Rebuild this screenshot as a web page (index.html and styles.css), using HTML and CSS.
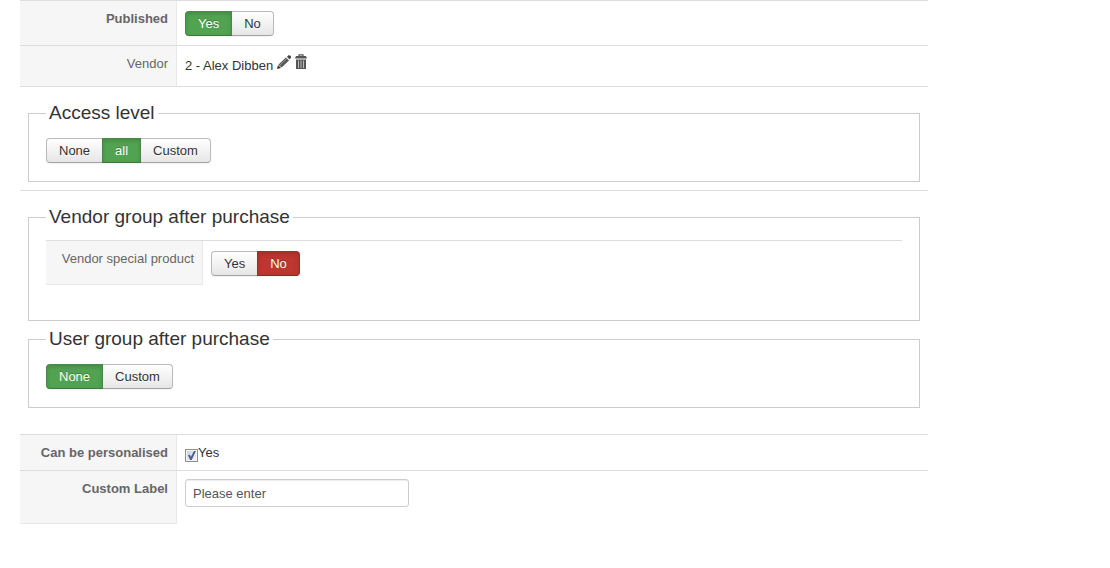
FILE: index.html
```html
<!DOCTYPE html>
<html lang="en">
<head>
    <meta charset="utf-8">
    <title>Product</title>
    <link rel="stylesheet" href="styles.css">
</head>
<body>
    <form class="product-form">
        <div class="row">
            <div class="key"><strong id="publishedKey">Published</strong></div>
            <div class="value">
                <div class="btn-group" role="radiogroup" aria-labelledby="publishedKey">
                    <input type="radio" name="published" id="publishedYes" checked>
                    <label class="btn" for="publishedYes">Yes</label>
                    <input type="radio" name="published" id="publishedNo" class="negative">
                    <label class="btn" for="publishedNo">No</label>
                </div>
            </div>
        </div>

        <div class="row vendor">
            <div class="key">Vendor</div>
            <div class="value">
                <span class="vendor-name">2 - Alex Dibben</span>
                <a class="icon" href="#" aria-label="Edit vendor">
                    <svg width="14" height="16" viewBox="0 0 14 16">
                        <path d="M0 15l1-4 3 3z" fill="#333"/>
                        <path d="M1.500 10.500L9 3.500l3 3-7.500 7z" fill="#555"/>
                        <path d="M2.500 11.500L10 4.500" stroke="#999" stroke-width="1"/>
                        <path d="M10 2.700L11.500 1.300Q12.500 .8 13.500 1.800T13.800 3.800L12.600 5.500z" fill="#444"/>
                    </svg>
                </a>
                <a class="icon" href="#" aria-label="Remove vendor">
                    <svg width="12" height="16" viewBox="0 0 12 16">
                        <path d="M4 2.500V.8h4v1.700" fill="none" stroke="#555" stroke-width="1.200"/>
                        <path d="M1 2h10l1 2.500H0z" fill="#555"/>
                        <path d="M1 5.500h10V15H1z" fill="#555"/>
                        <path d="M3.500 6.500V14M6 6.500V14M8.500 6.500V14" stroke="#bbb" stroke-width="1"/>
                    </svg>
                </a>
            </div>
        </div>

        <div class="section">
            <fieldset>
                <legend>Access level</legend>
                <div class="btn-group">
                    <input type="radio" name="access" id="accessNone">
                    <label class="btn" for="accessNone">None</label>
                    <input type="radio" name="access" id="accessAll" checked>
                    <label class="btn" for="accessAll">all</label>
                    <input type="radio" name="access" id="accessCustom">
                    <label class="btn" for="accessCustom">Custom</label>
                </div>
            </fieldset>
        </div>

        <div class="section last">
            <fieldset>
                <legend>Vendor group after purchase</legend>
                <div class="row block-end">
                    <div class="key" id="specialKey">Vendor special product</div>
                    <div class="value">
                        <div class="btn-group" role="radiogroup" aria-labelledby="specialKey">
                            <input type="radio" name="special" id="specialYes">
                            <label class="btn" for="specialYes">Yes</label>
                            <input type="radio" name="special" id="specialNo" class="negative" checked>
                            <label class="btn" for="specialNo">No</label>
                        </div>
                    </div>
                </div>
            </fieldset>
            <fieldset>
                <legend>User group after purchase</legend>
                <div class="btn-group">
                    <input type="radio" name="usergroup" id="usergroupNone" checked>
                    <label class="btn" for="usergroupNone">None</label>
                    <input type="radio" name="usergroup" id="usergroupCustom">
                    <label class="btn" for="usergroupCustom">Custom</label>
                </div>
            </fieldset>
        </div>

        <div class="row">
            <div class="key"><strong>Can be personalised</strong></div>
            <div class="value check">
                <input type="checkbox" id="personalised" checked>
                <label for="personalised">Yes</label>
            </div>
        </div>

        <div class="row">
            <div class="key"><label for="customLabel"><strong>Custom Label</strong></label></div>
            <div class="value">
                <input type="text" id="customLabel" value="Please enter">
            </div>
        </div>
    </form>
</body>
</html>
```
FILE: styles.css
```css
* {
    box-sizing: border-box;
}
body {
    margin: 0;
    padding: 0 20px;
    background-color: #fff;
    color: #333;
    font-family: "Liberation Sans", Arial, sans-serif;
    font-size: 13px;
    line-height: 18px;
}
.product-form {
    max-width: 908px;
}

/* label / value rows */
.row {
    display: flex;
    border-top: 1px solid #ddd;
}
.key {
    flex: 0 0 157px;
    padding: 9px 8px 7px;
    background-color: #f6f6f6;
    border-right: 1px solid #e9e9e9;
    color: #666;
    text-align: right;
}
.row:last-child .key {
    border-bottom: 1px solid #e9e9e9;
}
.value {
    flex: 1;
    padding: 8px;
}
.vendor .value {
    display: flex;
    gap: 4px;
    padding-bottom: 11px;
}
.vendor-name {
    padding-top: 3px;
}
.icon {
    height: 16px;
}
.icon svg {
    display: block;
}
.block-end {
    margin-bottom: 18px;
}

/* fieldsets */
.section {
    border-top: 1px solid #ddd;
    padding: 14px 8px 8px;
}
.section.last {
    padding-bottom: 26px;
}
fieldset {
    margin: 0;
    padding: 11px 17px 17px;
    border: 1px solid #ccc;
}
fieldset + fieldset {
    margin-top: 6px;
}
legend {
    padding: 0 3px;
    font-size: 19px;
    line-height: 24px;
}

/* button groups */
.btn-group {
    display: flex;
    position: relative;
    margin-top: 2px;
    padding-bottom: 1px;
}
.btn-group input {
    position: absolute;
    margin: 0;
    opacity: 0;
}
.btn {
    padding: 3px 12px 2px;
    border: 1px solid #bbb;
    border-bottom-color: #a2a2a2;
    background-image: linear-gradient(#fff, #e6e6e6);
    box-shadow: inset 0 1px 0 rgba(255, 255, 255, 0.2), 0 1px 2px rgba(0, 0, 0, 0.05);
    text-shadow: 0 1px 1px rgba(255, 255, 255, 0.75);
    cursor: pointer;
}
.btn + input + .btn {
    margin-left: -1px;
}
.btn:first-of-type {
    border-radius: 4px 0 0 4px;
}
.btn:last-of-type {
    border-radius: 0 4px 4px 0;
}
input:checked + .btn {
    z-index: 1;
    border-color: rgba(0, 0, 0, 0.15) rgba(0, 0, 0, 0.15) rgba(0, 0, 0, 0.25);
    background: #51a351;
    box-shadow: inset 0 2px 4px rgba(0, 0, 0, 0.15), 0 1px 2px rgba(0, 0, 0, 0.05);
    color: #fff;
    text-shadow: 0 -1px 0 rgba(0, 0, 0, 0.25);
}
input.negative:checked + .btn {
    background: #bd362f;
}
.btn-group input:focus-visible + .btn {
    outline: 2px solid #3071a9;
}

/* inputs */
input[type="text"] {
    display: block;
    width: 224px;
    max-width: 100%;
    height: 28px;
    margin: 0 0 9px;
    padding: 4px 7px;
    border: 1px solid #ccc;
    border-radius: 3px;
    box-shadow: inset 0 1px 1px rgba(0, 0, 0, 0.075);
    color: #555;
    font: inherit;
}
.check {
    display: flex;
    align-items: flex-end;
    padding-top: 9px;
}
input[type="checkbox"] {
    appearance: none;
    width: 13px;
    height: 13px;
    margin: 0;
    border: 1px solid #8e8f8f;
    background: linear-gradient(135deg, #cbd0d8, #f6f6f6);
    box-shadow: inset 0 0 0 1px #f4f4f4;
}
input[type="checkbox"]:checked::before {
    content: "";
    display: block;
    width: 11px;
    height: 11px;
    background: #4a5f97;
    clip-path: polygon(18% 48%, 34% 42%, 45% 62%, 72% 10%, 90% 10%, 52% 92%, 38% 92%);
}
```
